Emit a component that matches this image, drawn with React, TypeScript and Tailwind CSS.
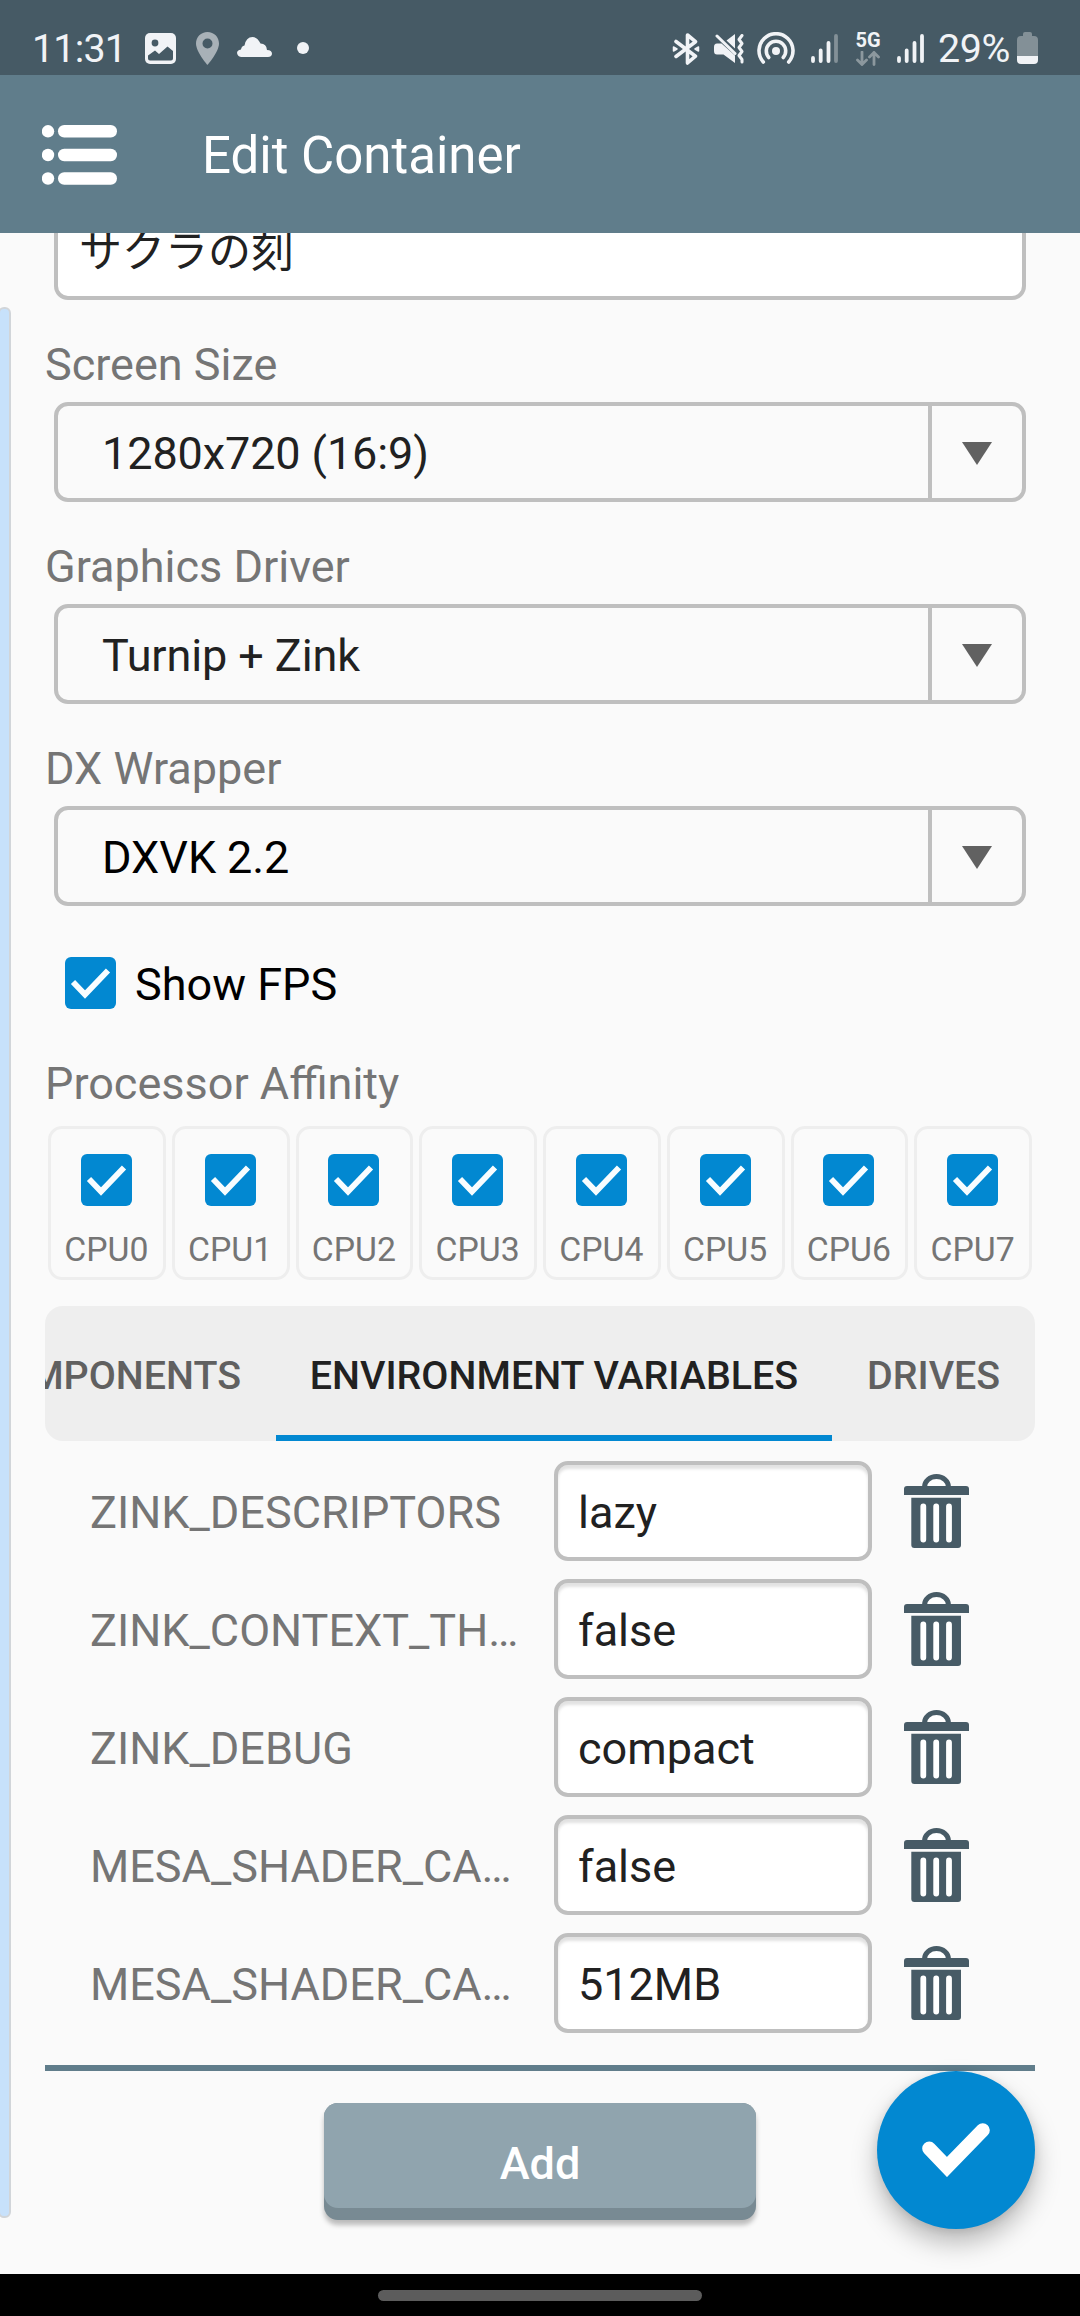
import type { ReactNode } from "react";

function StatusBar() {
  return (
    <div className="flex h-[75px] shrink-0 items-start bg-[#465a65] pt-[30px] text-[#f1f3f6]">
      <span className="ml-[32px] w-[100px] text-[39.4px] leading-[37px] tracking-[-0.8px]">11:31</span>
      <svg className="ml-[13px] mt-[3px]" width="31" height="31" viewBox="0 0 31 31">
        <rect width="31" height="31" rx="5" fill="#f1f3f6" />
        <circle cx="10" cy="10" r="3.4" fill="#465a65" />
        <path d="M3 22.5 L10 17.5 L14 21 L22.5 13.5 L28 18 V25.5 Q28 27.5 26 27.5 H5 Q3 27.5 3 25.5Z" fill="#465a65" />
      </svg>
      <svg className="ml-[20px] mt-[2px]" width="23" height="33" viewBox="0 0 23 33">
        <path fillRule="evenodd" d="M11.5 0C5 0 0 5 0 11.5C0 20 11.5 33 11.5 33S23 20 23 11.5C23 5 18 0 11.5 0ZM11.5 6.5A5 5 0 1 1 11.5 16.5A5 5 0 1 1 11.5 6.5Z" fill="#a8b1b7" />
      </svg>
      <svg className="ml-[18px] mt-[7px]" width="35" height="20" viewBox="0 0 35 20">
        <path d="M5 20A5 5 0 0 1 0 16Q0 13 4 12.5Q4.500 9 7.500 8.500Q9 0 15.500 0Q20.500 0 23.500 6.500Q29.500 6.500 30 13Q35 13 35 17Q34.500 20 31 20Z" fill="#f1f3f6" />
      </svg>
      <span className="ml-[25px] mt-[12px] size-[12px] rounded-full bg-[#f1f3f6]" />

      <svg className="ml-auto mt-[3px]" width="28" height="32" viewBox="0 0 28 32" fill="none" stroke="#f1f3f6" strokeWidth="3.6" strokeLinejoin="round" strokeLinecap="round">
        <path d="M4 8.500L23.500 23.200L15.500 30V2L23.500 8.700L4 23.500" />
        <path d="M1.500 14L5 16L1.500 18ZM26.500 14L23 16L26.500 18Z" fill="#f1f3f6" strokeWidth="1.500" />
      </svg>
      <svg className="ml-[14px] mt-[4px]" width="31" height="30" viewBox="0 0 31 30">
        <path d="M0 13Q0 9.500 3 9.500H7.500L21 21.500V29L9.500 20.500H3Q0 20.500 0 17ZM12.500 6.500L21 0V14.500Z" fill="#f1f3f6" />
        <path d="M3 2L21 19.500" stroke="#f1f3f6" strokeWidth="3" strokeLinecap="round" />
        <path d="M28 1.500L25 5.500L28 9.500L25 13.500L28 17.500L25 21.500L28 25.500V28" fill="none" stroke="#f1f3f6" strokeWidth="3" strokeLinecap="round" strokeLinejoin="round" />
      </svg>
      <svg className="ml-[12px] mt-[2px]" width="38" height="32" viewBox="0 0 38 32" fill="none" stroke="#f1f3f6" strokeWidth="3.600" strokeLinecap="round">
        <path d="M6.300 30A17 17 0 1 1 31.700 30" />
        <path d="M11.800 25.500A9.700 9.700 0 1 1 26.200 25.500" />
        <circle cx="19" cy="19" r="4" fill="#f1f3f6" stroke="none" />
      </svg>
      <Signal dim className="ml-[16px] mt-[4px]" />
      <div className="ml-[17px] mt-[1px] flex w-[26px] shrink-0 flex-col items-center">
        <span className="text-[20px] font-bold leading-[18px]">5G</span>
        <svg className="mt-[2px]" width="24" height="15" viewBox="0 0 24 15" fill="none" stroke="#8c989e" strokeWidth="2.800" strokeLinecap="round">
          <path d="M6 1V13.500M1.500 9L6 13.500L10.500 9" />
          <path d="M18 13.500V1.500M13.500 6L18 1.500L22.500 6" />
        </svg>
      </div>
      <Signal className="ml-[16px] mt-[4px]" />
      <span className="ml-[14px] w-[74px] shrink-0 whitespace-nowrap text-[39.4px] leading-[37px] tracking-[-0.4px]">29%</span>
      <svg className="ml-[5px] mr-[42px] mt-[2px]" width="21" height="32" viewBox="0 0 21 32">
        <path d="M6 2Q6 0 8 0H13Q15 0 15 2V4H17Q21 4 21 8V24H0V8Q0 4 4 4H6Z" fill="#839097" />
        <path d="M0 24H21V28Q21 32 17 32H4Q0 32 0 28Z" fill="#f1f3f6" />
      </svg>
    </div>
  );
}

function Signal({ dim, className }: { dim?: boolean; className: string }) {
  return (
    <svg className={className} width="27" height="30" viewBox="0 0 27 30" stroke="#f1f3f6" strokeWidth="3.800" strokeLinecap="round">
      <path d="M2 24V27M9.700 16.500V27M17.500 9V27" />
      <path d="M25 2V27" stroke={dim ? "#839097" : "#f1f3f6"} />
    </svg>
  );
}

function AppBar() {
  return (
    <div className="flex h-[158px] shrink-0 items-center bg-[#607d8b]">
      <svg className="ml-[42px] mt-[2px]" width="75" height="60" viewBox="0 0 75 60" fill="#fff">
        {[0, 23.7, 47.2].map((y) => (
          <g key={y}>
            <circle cx="6" cy={y + 6.3} r="6.200" />
            <rect x="16" y={y} width="59" height="12.500" rx="6.200" />
          </g>
        ))}
      </svg>
      <h1 className="ml-[85px] pt-[4px] text-[51px] leading-[60px] text-white">Edit Container</h1>
    </div>
  );
}

function Label({ children, className = "" }: { children: ReactNode; className?: string }) {
  return <div className={`h-[52px] text-[45px] leading-[52px] text-[#757575] ${className}`}>{children}</div>;
}

function Select({ label, value, black }: { label: string; value: string; black?: boolean }) {
  return (
    <div className="mb-[39px]">
      <Label>{label}</Label>
      <div className="mx-[9px] mt-[11px] flex h-[100px] rounded-[14px] border-[4px] border-[#bfbfbf]">
        <div className={`flex-1 pl-[44px] pt-[2px] text-[45px] leading-[92px] tracking-[-0.1px] ${black ? "text-black" : "text-[#212121]"}`}>{value}</div>
        <div className="flex w-[94px] items-center justify-center border-l-[4px] border-[#bfbfbf] pt-[2px]">
          <svg width="30" height="23" viewBox="0 0 30 23">
            <path d="M0 0H30L15 23Z" fill="#616161" />
          </svg>
        </div>
      </div>
    </div>
  );
}

function Checkbox() {
  return (
    <svg width="51" height="52" viewBox="0 0 51 52" className="shrink-0">
      <rect width="51" height="52" rx="6" fill="#0288d1" />
      <path d="M8 25L20 37.500L43 13.500" fill="none" stroke="#f8fdff" strokeWidth="5.800" />
    </svg>
  );
}

function Trash() {
  return (
    <svg className="ml-[32px]" width="65" height="74" viewBox="0 0 65 74">
      <path d="M20.500 13A12 10.500 0 0 1 44.500 13" fill="#fff" stroke="#475b66" strokeWidth="5" />
      <path d="M0 21V15Q0 12 3 12H62Q65 12 65 15V21Z" fill="#475b66" />
      <path d="M7.300 23.700H57V71Q57 74 54 74H10.300Q7.300 74 7.300 71Z" fill="#475b66" />
      <path d="M19.300 32.500V65.500M32.200 32.500V65.500M45 32.500V65.500" stroke="#fff" strokeWidth="5.800" strokeLinecap="round" />
    </svg>
  );
}

const cpus = [0, 1, 2, 3, 4, 5, 6, 7];

const variables = [
  ["ZINK_DESCRIPTORS", "lazy"],
  ["ZINK_CONTEXT_TH…", "false"],
  ["ZINK_DEBUG", "compact"],
  ["MESA_SHADER_CA…", "false"],
  ["MESA_SHADER_CA…", "512MB"],
];

export default function App() {
  return (
    <div className="flex h-[2316px] w-[1080px] flex-col overflow-hidden bg-[#fafafa] font-['Roboto','Noto_Sans_CJK_JP',sans-serif]">
      <StatusBar />
      <AppBar />
      <main className="relative flex h-[2041px] shrink-0 flex-col overflow-hidden px-[45px]">
        <div className="absolute -left-[2px] top-[74px] h-[1911px] w-[13px] rounded-[6px] border-2 border-[#d1d5d9] bg-[#c7e1fb]" />

        <div className="mx-[9px] -mt-[33px] h-[100px] shrink-0 rounded-[14px] border-[4px] border-[#bfbfbf] bg-white pl-[21px] text-[43px] leading-[97px] text-[#212121]">
          サクラの刻
        </div>

        <div className="mt-[39px]">
          <Select label="Screen Size" value="1280x720 (16:9)" />
          <Select label="Graphics Driver" value="Turnip + Zink" />
          <Select label="DX Wrapper" value="DXVK 2.2" black />
        </div>

        <div className="ml-[19.5px] mt-[8px] flex h-[60px] items-center gap-[19.5px]">
          <Checkbox />
          <span className="pt-[3px] text-[45px] leading-[60px] text-black">Show FPS</span>
        </div>

        <Label className="mt-[45px]">Processor Affinity</Label>
        <div className="mt-[16px] grid h-[154px] grid-cols-8">
          {cpus.map((n) => (
            <div key={n} className="ml-[3px] mr-[3px] flex flex-col items-center rounded-[14px] border-[3px] border-[#eeeeee] pr-px pt-[25px]">
              <Checkbox />
              <span className="mt-[24px] text-[33.75px] leading-[40px] text-[#757575]">CPU{n}</span>
            </div>
          ))}
        </div>

        <div className="mt-[26px] flex h-[135px] shrink-0 items-stretch overflow-hidden rounded-[18px] bg-[#eeeeee] text-[39.4px] font-medium leading-[139px] text-[#606060]">
          <div className="flex w-[231px] shrink-0 justify-end whitespace-nowrap pr-[35px]">WIN COMPONENTS</div>
          <div className="w-[556px] shrink-0 whitespace-nowrap border-b-[6px] border-[#0288d1] text-center text-[#212121]">
            ENVIRONMENT VARIABLES
          </div>
          <div className="flex-1 pl-[35px]">DRIVES</div>
        </div>

        <div className="mt-[11px]">
          {variables.map(([name, value], i) => (
            <div key={i} className="flex h-[118px] items-center pl-[45px]">
              <div className="w-[464px] pt-[3px] text-[45px] leading-[60px] text-[#757575]">{name}</div>
              <div className="h-[100px] w-[318px] rounded-[14px] border-[4px] border-[#bfbfbf] bg-white pl-[20px] text-[45px] leading-[95px] text-[#212121] shadow-[inset_0_4px_3px_#e2e2e2]">
                {value}
              </div>
              <Trash />
            </div>
          ))}
        </div>

        <div className="mt-[23px] h-[6px] shrink-0 bg-[#607d8b]" />

        <button className="ml-[279px] mt-[32px] flex h-[117px] w-[432px] shrink-0 flex-col justify-start rounded-[14px] bg-[#788a93] shadow-[0_5px_5px_rgba(0,0,0,0.25)]">
          <span className="block h-[105px] w-full rounded-[14px] bg-[#90a4ae] pt-[7px] text-center text-[45px] font-medium leading-[107px] text-white">
            Add
          </span>
        </button>

        <button className="absolute left-[877px] top-[1838px] flex size-[158px] items-center justify-center rounded-full bg-[#0288d1] shadow-[0_14px_26px_rgba(0,0,0,0.26),0_2px_10px_rgba(0,0,0,0.10)]">
          <svg width="68" height="54" viewBox="0 0 68 54">
            <path d="M7.200 25.500L25 44L60.800 7.200" fill="none" stroke="#fff" strokeWidth="14" strokeLinecap="round" strokeLinejoin="miter" />
          </svg>
        </button>
      </main>
      <div className="flex h-[42px] shrink-0 justify-center bg-black pt-[16px]">
        <div className="h-[11px] w-[324px] rounded-full bg-[#5c5c5c]" />
      </div>
    </div>
  );
}
